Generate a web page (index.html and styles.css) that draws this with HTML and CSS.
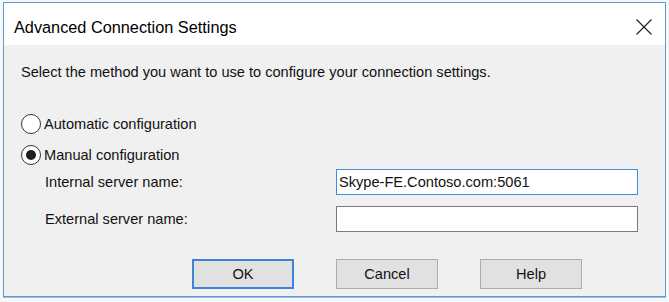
FILE: index.html
```html
<!DOCTYPE html>
<html lang="en">
	<head>
		<meta charset="UTF-8" />
		<meta name="viewport" content="width=device-width, initial-scale=1.0" />
		<title>Advanced Connection Settings</title>
		<link rel="stylesheet" href="styles.css">
	</head>
	<body>
		<div class="dialog">
			<div class="title-bar">
				<span class="title">Advanced Connection Settings</span>
				<button class="close-btn" aria-label="Close">
					<svg width="16" height="16" viewBox="0 0 16 16">
						<path d="M0.5 0.5 L15.5 15.5 M15.5 0.5 L0.5 15.5" stroke="#1a1a1a" stroke-width="1.1" fill="none" />
					</svg>
				</button>
			</div>
			<div class="dialog-body">
				<p class="intro">Select the method you want to use to configure your connection settings.</p>
				<label class="radio-row">
					<span class="radio"></span>
					Automatic configuration
				</label>
				<label class="radio-row">
					<span class="radio checked"></span>
					Manual configuration
				</label>
				<div class="server-grid">
					<span class="field-label">Internal server name:</span>
					<div class="text-box focused">Skype-FE.Contoso.com:5061</div>
					<span class="field-label">External server name:</span>
					<div class="text-box"></div>
				</div>
				<div class="button-row">
					<button class="dlg-btn default">OK</button>
					<button class="dlg-btn">Cancel</button>
					<button class="dlg-btn">Help</button>
				</div>
			</div>
		</div>
	</body>
</html>
```

FILE: styles.css
```css
body {
	margin: 0;
	background: #f6f7f9;
	font-family: "Liberation Sans", Arial, sans-serif;
	font-size: 14.6px;
	color: #111;
	height: 302px;
	overflow: hidden;
}

.dialog {
	margin: 2px 3px 0 3px;
	width: 663px;
	height: 295px;
	box-sizing: border-box;
	border: 1px solid #5f98d6;
	box-shadow: 0 1px 0 #9dbfe4;
	display: flex;
	flex-direction: column;
}

.title-bar {
	height: 42px;
	background: #fff;
	display: flex;
	align-items: center;
	justify-content: space-between;
	padding: 6px 13px 0 10px;
	box-sizing: border-box;
	flex-shrink: 0;
}

.title {
	font-family: "Liberation Sans", Arial, sans-serif;
	font-size: 16.3px;
	color: #000;
}

.close-btn {
	background: none;
	border: none;
	padding: 0;
	width: 16px;
	height: 16px;
	display: flex;
}

.dialog-body {
	flex: 1;
	background: #f0f0f0;
	padding: 19px 0 0 17px;
}

.intro {
	margin: 0 0 33px;
	line-height: 17px;
}

.radio-row {
	display: flex;
	align-items: center;
	gap: 3px;
	height: 20px;
	margin-bottom: 11px;
}

.radio {
	width: 18px;
	height: 18px;
	border: 1px solid #333;
	border-radius: 50%;
	background: #fff;
	display: flex;
	align-items: center;
	justify-content: center;
}

.radio.checked::after {
	content: "";
	width: 10px;
	height: 10px;
	border-radius: 50%;
	background: #1f1f1f;
}

.server-grid {
	display: grid;
	grid-template-columns: 291px 302px;
	row-gap: 11px;
	align-items: center;
	margin: -7px 0 0 24px;
}

.text-box {
	height: 26px;
	box-sizing: border-box;
	border: 1px solid #7a7a7a;
	background: #fff;
	padding: 0 2px;
	line-height: 24px;
}

.text-box.focused {
	border-color: #3d8ee0;
}

.button-row {
	display: flex;
	gap: 42px;
	margin: 27px 0 0 171px;
}

.dlg-btn {
	width: 102px;
	height: 30px;
	background: #e1e1e1;
	border: 1px solid #adadad;
	font-family: "Liberation Sans", Arial, sans-serif;
	font-size: 14.6px;
	color: #111;
	padding: 0;
}

.dlg-btn.default {
	border: 2px solid #3b84d6;
}
```
